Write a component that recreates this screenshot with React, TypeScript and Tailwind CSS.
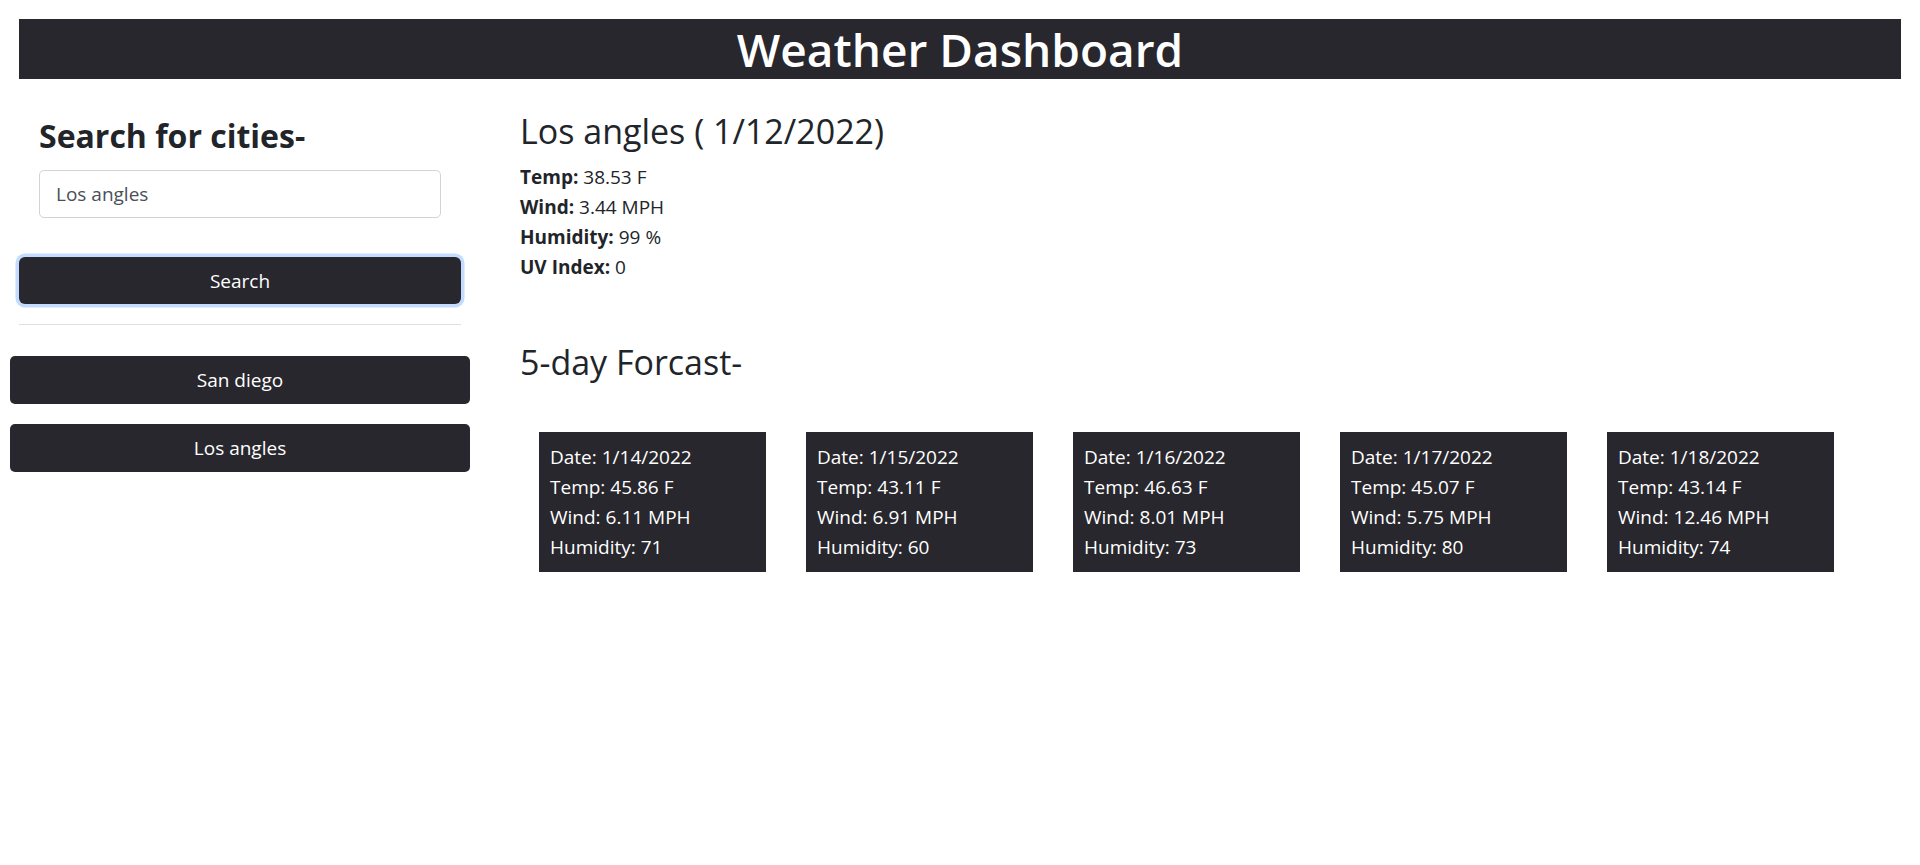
const forecast = [
  { date: "1/14/2022", temp: "45.86", wind: "6.11", hum: "71" },
  { date: "1/15/2022", temp: "43.11", wind: "6.91", hum: "60" },
  { date: "1/16/2022", temp: "46.63", wind: "8.01", hum: "73" },
  { date: "1/17/2022", temp: "45.07", wind: "5.75", hum: "80" },
  { date: "1/18/2022", temp: "43.14", wind: "12.46", hum: "74" },
];

export default function App() {
  return (
    <div
      className="min-h-[865px] bg-white text-[#212529]"
      style={{ fontFamily: '"Open Sans", "Noto Sans", sans-serif' }}
    >
      <header className="mx-[19px] mt-[19px] flex h-[60px] items-center justify-center bg-[#28272d]">
        <h1 className="text-[46px] font-semibold leading-none text-white">Weather Dashboard</h1>
      </header>

      <div className="flex">
        <aside className="flex w-[480px] shrink-0 flex-col pt-[38px]">
          <h2 className="pl-[39px] text-[32px] font-bold leading-[1.2]">Search for cities-</h2>
          <div className="mt-[15px] pl-[39px]">
            <input
              readOnly
              value="Los angles"
              className="h-[48px] w-[402px] rounded-[5px] border border-[#ced4da] px-[16px] text-[19px] text-[#495057] outline-none"
            />
          </div>
          <div className="mt-[39px] pl-[19px]">
            <button className="h-[47px] w-[442px] rounded-[6px] bg-[#28272d] text-[19px] text-white shadow-[0_0_0_3.5px_rgba(13,110,253,0.25)]">
              Search
            </button>
          </div>
          <div className="ml-[19px] mt-[20px] w-[442px] border-t border-[#dedfe0]" />
          <div className="mt-[31px] flex flex-col gap-[20px] pl-[10px]">
            <button className="h-[48px] w-[460px] rounded-[5px] bg-[#28272d] text-[19px] text-white">San diego</button>
            <button className="h-[48px] w-[460px] rounded-[5px] bg-[#28272d] text-[19px] text-white">Los angles</button>
          </div>
        </aside>

        <main className="flex flex-col pl-[40px] pt-[32px]">
          <h2 className="text-[34px] leading-[1.2]">Los angles ( 1/12/2022)</h2>
          <div className="mt-[10px] text-[19px] leading-[30px]">
            <p><span className="font-bold">Temp:</span> 38.53 F</p>
            <p><span className="font-bold">Wind:</span> 3.44 MPH</p>
            <p><span className="font-bold">Humidity:</span> 99 %</p>
            <p><span className="font-bold">UV Index:</span> 0</p>
          </div>
          <h2 className="mt-[60px] text-[34px] leading-[1.2]">5-day Forcast-</h2>
          <div className="mt-[49px] flex gap-[40px] pl-[19px]">
            {forecast.map((d) => (
              <div key={d.date} className="h-[140px] w-[227px] bg-[#28272d] px-[11px] py-[10px] text-[19px] leading-[30px] text-white">
                <p>Date: {d.date}</p>
                <p>Temp: {d.temp} F</p>
                <p>Wind: {d.wind} MPH</p>
                <p>Humidity: {d.hum}</p>
              </div>
            ))}
          </div>
        </main>
      </div>
    </div>
  );
}
